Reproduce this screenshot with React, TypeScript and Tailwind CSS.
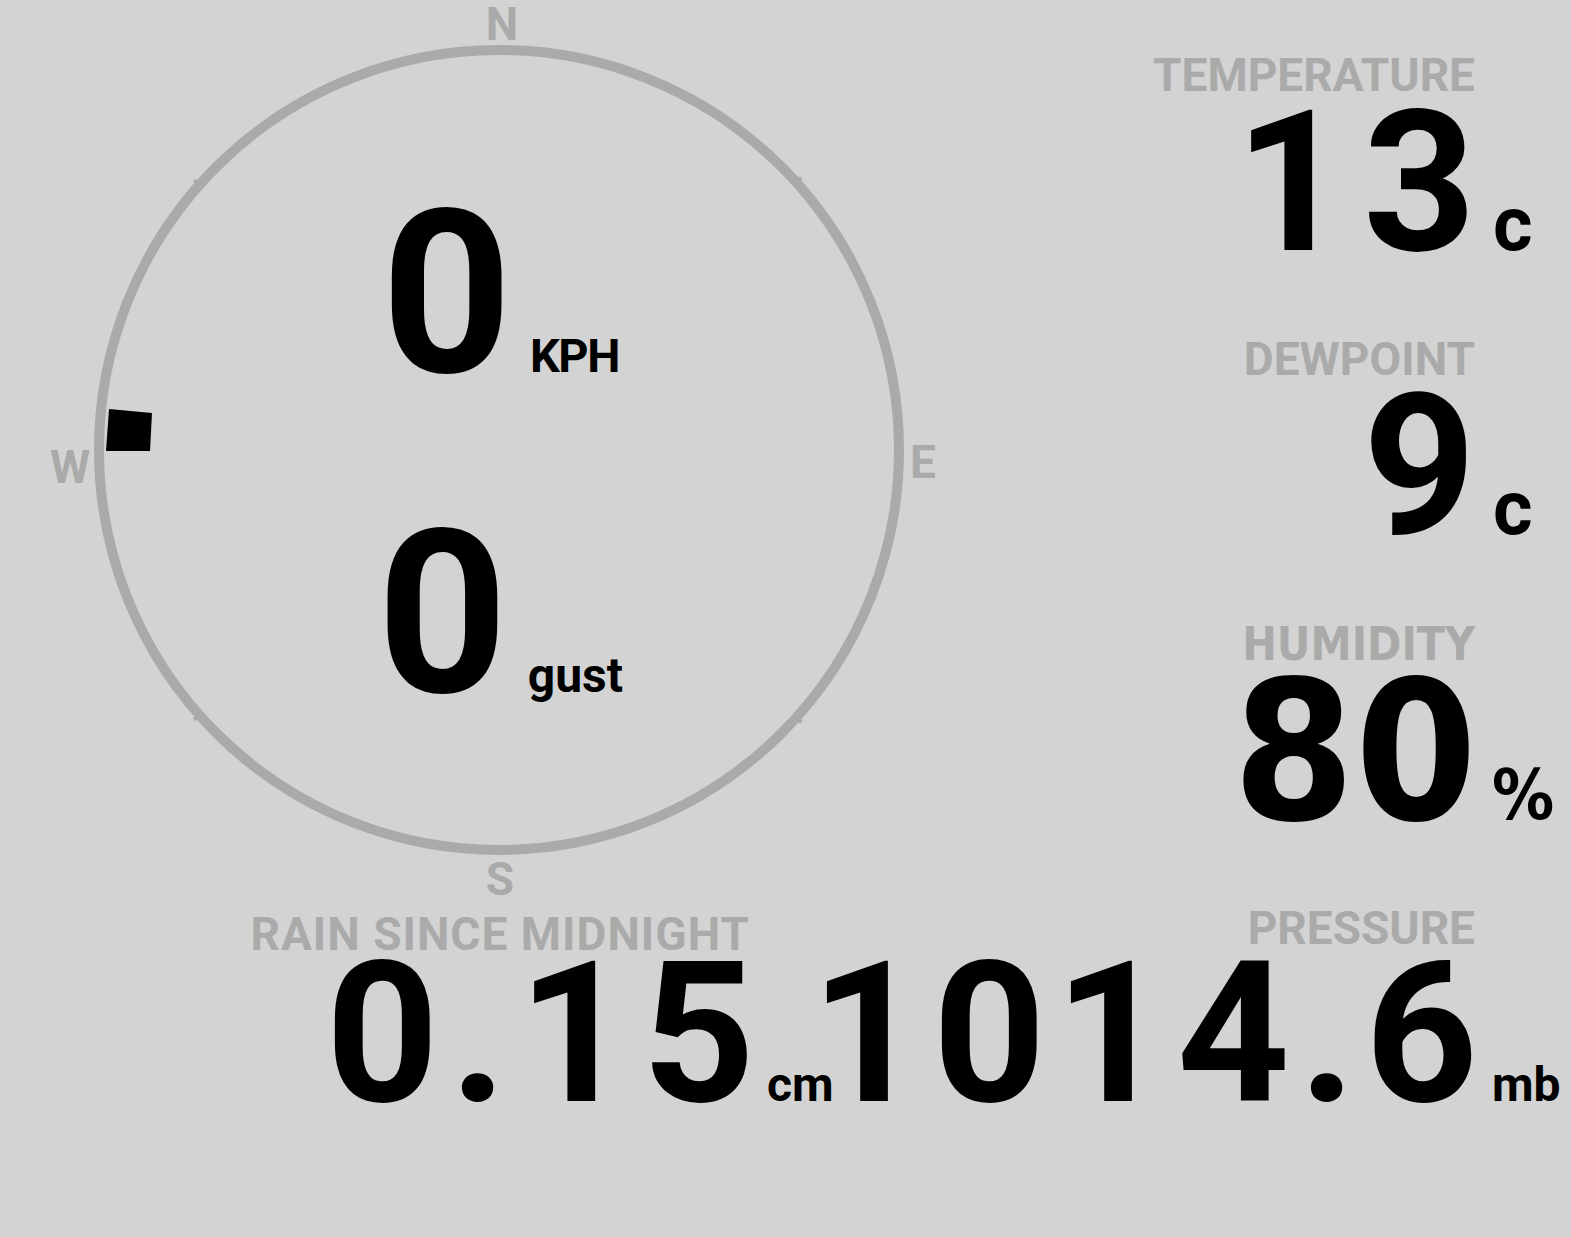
import React from "react";

const LABEL = "text-[46px] leading-[46px] text-[#aaaaaa]";
const DIN = "[font-family:Roboto,'Liberation_Sans',sans-serif]";
const VERDE = "[font-family:'DejaVu_Sans_Condensed','DejaVu_Sans',sans-serif] [font-stretch:condensed]";

const CX = 499;
const CY = 450;
const R = 400;

function Compass() {
  const ticks = [180 + 41.5, 360 - 42, 180 - 41.5, 42];
  return (
    <div className="relative h-[905px] w-[1000px] shrink-0">
      <svg className="absolute inset-0" width={1000} height={905} viewBox="0 0 1000 905">
        <circle cx={CX} cy={CY} r={R} fill="none" stroke="#aaaaaa" strokeWidth={10} />
        {ticks.map((a) => {
          const rad = (a * Math.PI) / 180;
          const c = Math.cos(rad);
          const s = Math.sin(rad);
          return (
            <line
              key={a}
              x1={CX + c * (R - 3)}
              y1={CY + s * (R - 3)}
              x2={CX + c * (R + 7)}
              y2={CY + s * (R + 7)}
              stroke="#aaaaaa"
              strokeWidth={4}
            />
          );
        })}
        <polygon points="109,409 152,413 150,451 106,451" fill="#000" />
      </svg>

      <span className={`absolute left-[502px] top-[1px] -translate-x-1/2 ${LABEL}`}>N</span>
      <span className={`absolute left-[500px] top-[856px] -translate-x-1/2 ${LABEL}`}>S</span>
      <span className={`absolute left-[70px] top-[444px] -translate-x-1/2 ${LABEL}`}>W</span>
      <span className={`absolute left-[923px] top-[439px] -translate-x-1/2 ${LABEL}`}>E</span>

      <div className="relative flex flex-col pt-[134px]">
        <div className="flex items-baseline justify-center">
          <span className="text-[228px] leading-[320px]">0</span>
          <span className="ml-[18px] text-[47px] leading-none tracking-[-1.5px]">KPH</span>
        </div>
        <div className="flex items-baseline justify-center">
          <span className="text-[228px] leading-[320px]">0</span>
          <span className="ml-[20px] text-[48px] leading-none">gust</span>
        </div>
      </div>
    </div>
  );
}

function Stat({
  label,
  value,
  unit,
  alt,
  unitClass,
}: {
  label: string;
  value: string;
  unit: string;
  alt?: boolean;
  unitClass: string;
}) {
  return (
    <div className="flex h-[284.5px] flex-col">
      <div className={`pr-[96px] text-right ${LABEL} ${alt ? VERDE + " text-[45px]" : ""}`}>{label}</div>
      <div className="flex items-baseline">
        <div className="flex min-w-0 flex-1 justify-end">
          <span
            className={
              alt
                ? `${VERDE} mr-[-4px] whitespace-nowrap text-[195px] leading-[170px]`
                : "mr-[-18px] whitespace-nowrap text-[197px] leading-[170px] tracking-[15px]"
            }
          >
            {value}
          </span>
        </div>
        <span className={`w-[98px] shrink-0 leading-none ${unitClass}`}>{unit}</span>
      </div>
    </div>
  );
}

export default function App() {
  return (
    <div className={`min-h-screen w-full overflow-hidden bg-[#d3d3d3] font-bold text-black ${DIN}`}>
      <div className="flex h-[905px]">
        <Compass />
        <div className="flex min-w-0 flex-1 flex-col pt-[52px]">
          <Stat label="TEMPERATURE" value="13" unit="c" unitClass="pl-[20px] text-[76px]" />
          <Stat label="DEWPOINT" value="9" unit="c" unitClass="pl-[20px] text-[76px]" />
          <Stat label="HUMIDITY" value="80" unit="%" alt unitClass={`${VERDE} pl-[19px] text-[69px]`} />
        </div>
      </div>

      <div className="flex items-end pb-[2px]">
        <div className="flex w-[830px] shrink-0 flex-col">
          <div className={`mb-[-8px] pr-[80px] text-right tracking-[1px] ${LABEL}`}>RAIN SINCE MIDNIGHT</div>
          <div className="flex items-baseline">
            <div className="flex min-w-0 flex-1 justify-end">
              <span className="mr-[-16px] whitespace-nowrap text-[197px] leading-[170px] tracking-[11px]">0.15</span>
            </div>
            <span className="w-[80px] shrink-0 pl-[17px] text-[48px] leading-none">cm</span>
          </div>
        </div>
        <div className="flex min-w-0 flex-1 flex-col">
          <div className={`mb-[-2px] pr-[96px] text-right ${LABEL}`}>PRESSURE</div>
          <div className="flex items-baseline">
            <div className="flex min-w-0 flex-1 justify-end">
              <span className="mr-[-14px] whitespace-nowrap text-[197px] leading-[170px] tracking-[9px]">1014.6</span>
            </div>
            <span className="w-[98px] shrink-0 pl-[19px] text-[48px] leading-none">mb</span>
          </div>
        </div>
      </div>
    </div>
  );
}
